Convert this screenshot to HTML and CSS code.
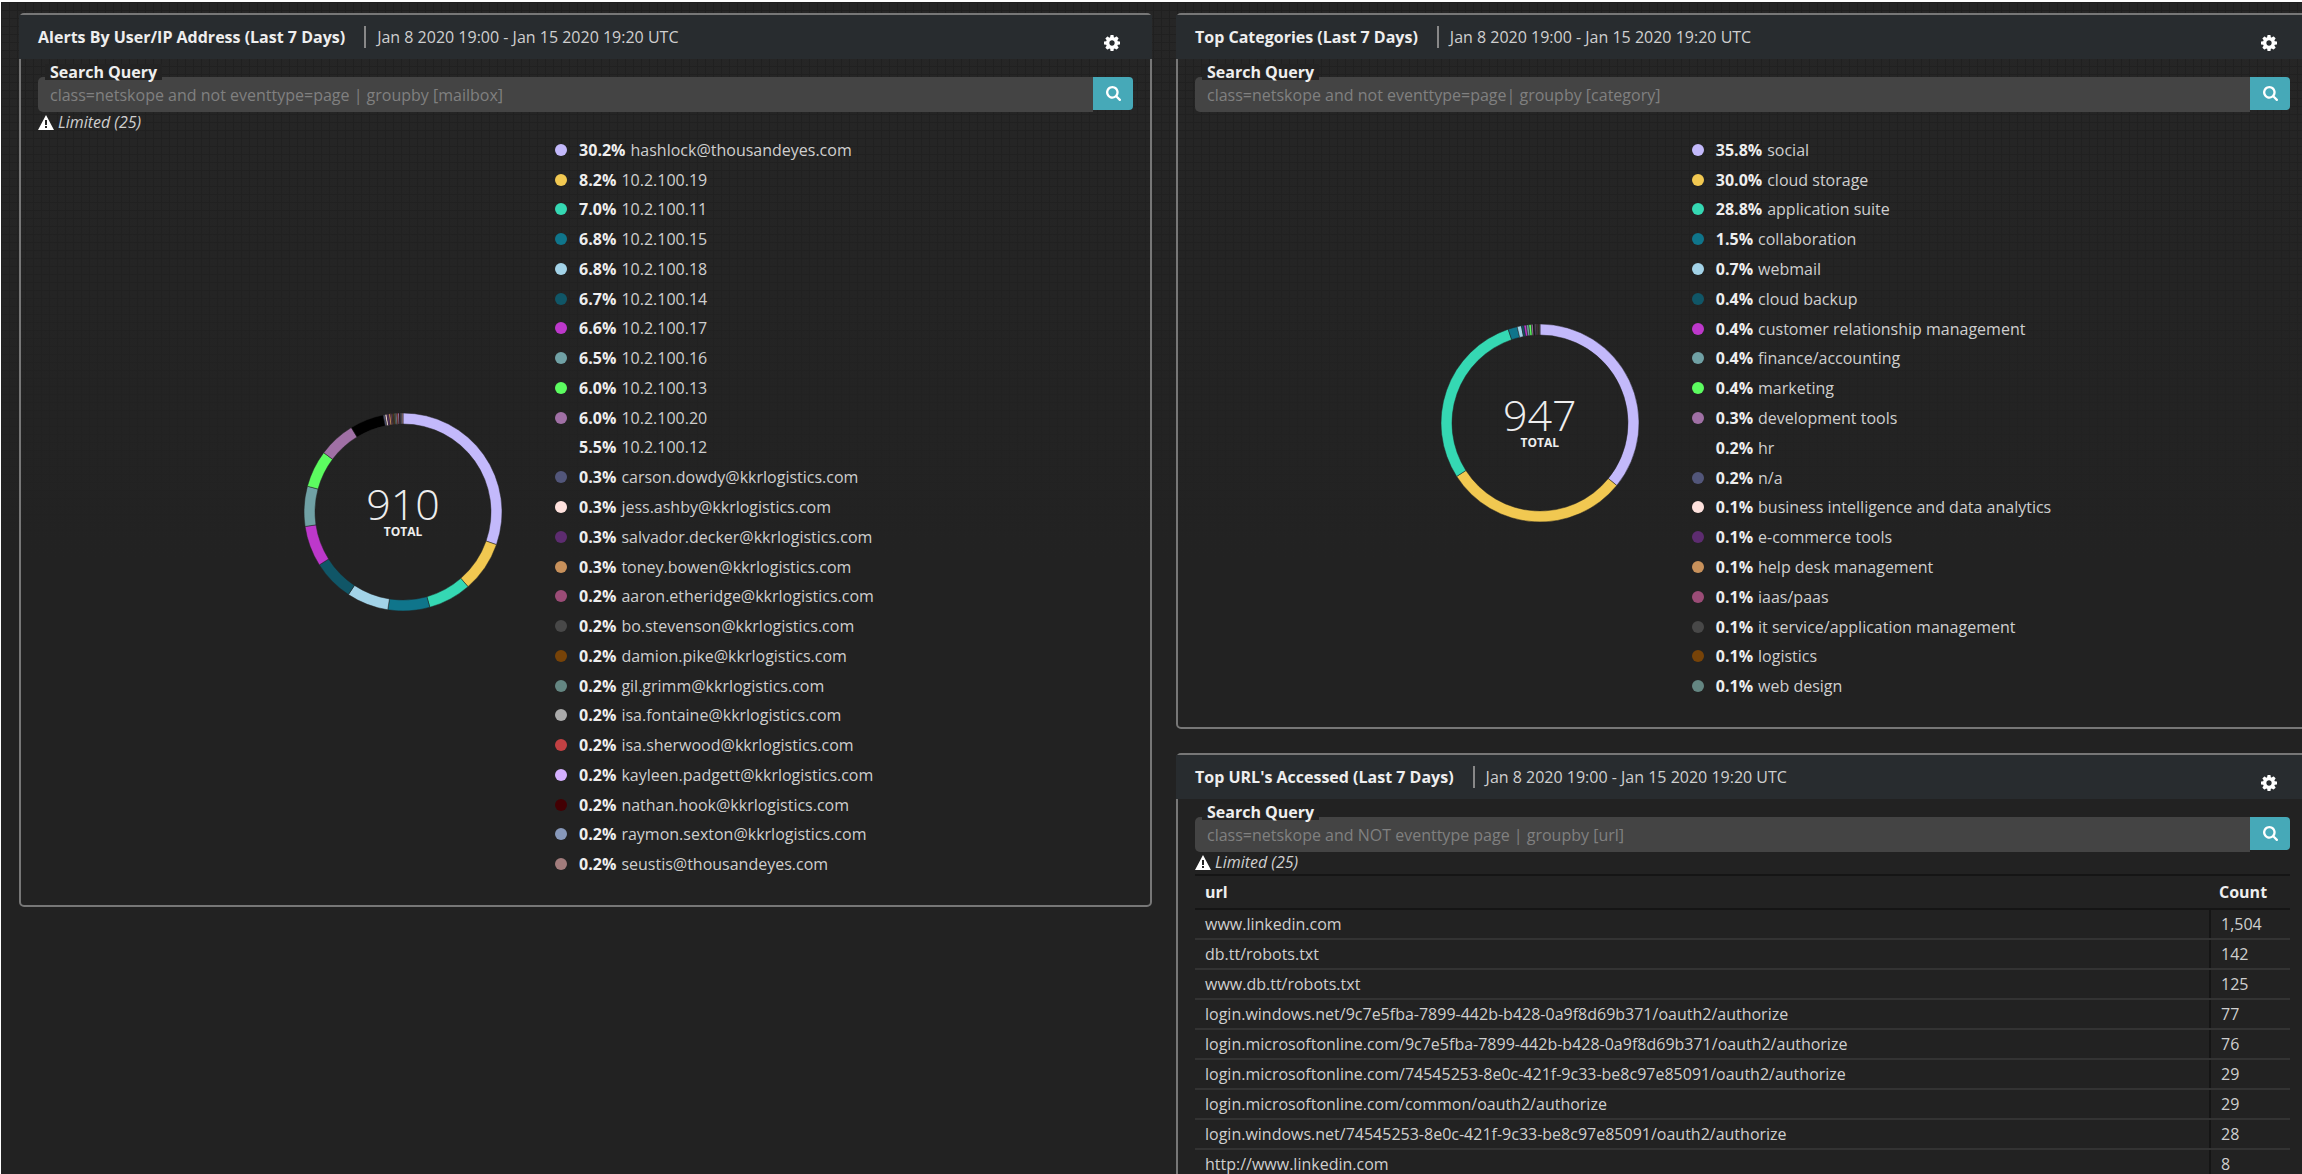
FILE: index.html
```html
<!DOCTYPE html>
<html lang="en">
<head>
<meta charset="utf-8">
<title>Netskope Dashboard</title>
<link rel="stylesheet" href="styles.css">
</head>
<body>
<svg class="sprite" aria-hidden="true">
  <symbol id="gear" viewBox="0 0 1536 1536"><path d="M1024 768q0-106-75-181t-181-75-181 75-75 181 75 181 181 75 181-75 75-181zm512-109v222q0 12-8 23t-20 13l-185 28q-19 54-39 91 35 50 107 138 10 12 10 25t-9 23q-27 37-99 108t-94 71q-12 0-26-9l-138-108q-44 23-91 38-16 136-29 186-7 28-36 28H657q-14 0-24.500-8.500T621 1506l-28-184q-49-16-90-37l-141 107q-10 9-25 9-14 0-25-11-126-114-165-168-7-10-7-23 0-12 8-23 15-21 51-66.500t54-70.500q-27-50-41-99L29 913q-13-2-21-12.500T0 877V655q0-12 8-23t19-13l186-28q14-46 39-92-40-57-107-138-10-12-10-24 0-10 9-23 26-36 98.500-107.500T337 135q13 0 26 10l138 107q44-23 91-38 16-136 29-186 7-28 36-28h222q14 0 24.500 8.500T915 30l28 184q49 16 90 37l142-107q9-9 24-9 13 0 25 10 129 119 165 170 7 8 7 22 0 12-8 23-15 21-51 66.500t-54 70.500q26 50 41 98l183 28q13 2 21 12.500t8 23.500z"/></symbol>
  <symbol id="search" viewBox="0 0 1664 1664"><path d="M1152 704q0-185-131.500-316.500T704 256 387.500 387.500 256 704t131.500 316.500T704 1152t316.500-131.500T1152 704zm512 832q0 52-38 90t-90 38q-54 0-90-38l-343-342q-179 124-399 124-143 0-273.500-55.500t-225-150-150-225T0 704t55.500-273.500 150-225 225-150T704 0t273.500 55.500 225 150 150 225T1408 704q0 220-124 399l343 343q37 37 37 90z"/></symbol>
  <symbol id="warn" viewBox="0 0 16 15"><path fill-rule="evenodd" d="M8 0 16 15H0zM7 5v5h2V5zm0 6v2h2v-2z"/></symbol>
</svg>
<main class="board">
  <div class="column">
    <section class="panel">
      <header class="panel-head">
        <h2>Alerts By User/IP Address (Last 7 Days)</h2>
        <span class="range">Jan 8 2020 19:00 - Jan 15 2020 19:20 UTC</span>
        <button class="gear" type="button" aria-label="Settings"><svg><use href="#gear"/></svg></button>
      </header>
      <form class="search">
        <label for="q1">Search Query</label>
        <input id="q1" type="text" placeholder="class=netskope and not eventtype=page | groupby [mailbox]">
        <button type="button" aria-label="Search"><svg><use href="#search"/></svg></button>
      </form>
      <p class="limited"><svg><use href="#warn"/></svg>Limited (25)</p>
      <div class="chart users">
        <div class="donut">
          <svg viewBox="0 0 200 200"></svg>
          <div class="total"><strong>910</strong><span>TOTAL</span></div>
        </div>
        <ul class="legend"></ul>
      </div>
    </section>
  </div>
  <div class="column">
    <section class="panel">
      <header class="panel-head">
        <h2>Top Categories (Last 7 Days)</h2>
        <span class="range">Jan 8 2020 19:00 - Jan 15 2020 19:20 UTC</span>
        <button class="gear" type="button" aria-label="Settings"><svg><use href="#gear"/></svg></button>
      </header>
      <form class="search">
        <label for="q2">Search Query</label>
        <input id="q2" type="text" placeholder="class=netskope and not eventtype=page| groupby [category]">
        <button type="button" aria-label="Search"><svg><use href="#search"/></svg></button>
      </form>
      <div class="chart categories">
        <div class="donut">
          <svg viewBox="0 0 200 200"></svg>
          <div class="total"><strong>947</strong><span>TOTAL</span></div>
        </div>
        <ul class="legend"></ul>
      </div>
    </section>
    <section class="panel">
      <header class="panel-head">
        <h2>Top URL's Accessed (Last 7 Days)</h2>
        <span class="range">Jan 8 2020 19:00 - Jan 15 2020 19:20 UTC</span>
        <button class="gear" type="button" aria-label="Settings"><svg><use href="#gear"/></svg></button>
      </header>
      <form class="search">
        <label for="q3">Search Query</label>
        <input id="q3" type="text" placeholder="class=netskope and NOT eventtype page | groupby [url]">
        <button type="button" aria-label="Search"><svg><use href="#search"/></svg></button>
      </form>
      <p class="limited"><svg><use href="#warn"/></svg>Limited (25)</p>
      <table class="urls">
        <thead><tr><th>url</th><th>Count</th></tr></thead>
        <tbody>
          <tr><td>www.linkedin.com</td><td>1,504</td></tr>
          <tr><td>db.tt/robots.txt</td><td>142</td></tr>
          <tr><td>www.db.tt/robots.txt</td><td>125</td></tr>
          <tr><td>login.windows.net/9c7e5fba-7899-442b-b428-0a9f8d69b371/oauth2/authorize</td><td>77</td></tr>
          <tr><td>login.microsoftonline.com/9c7e5fba-7899-442b-b428-0a9f8d69b371/oauth2/authorize</td><td>76</td></tr>
          <tr><td>login.microsoftonline.com/74545253-8e0c-421f-9c33-be8c97e85091/oauth2/authorize</td><td>29</td></tr>
          <tr><td>login.microsoftonline.com/common/oauth2/authorize</td><td>29</td></tr>
          <tr><td>login.windows.net/74545253-8e0c-421f-9c33-be8c97e85091/oauth2/authorize</td><td>28</td></tr>
          <tr><td>http://www.linkedin.com</td><td>8</td></tr>
        </tbody>
      </table>
    </section>
  </div>
</main>
<script src="charts.js"></script>
</body>
</html>
```
FILE: styles.css
```css
* { box-sizing: border-box; }
html { height: 100%; overflow: hidden; background: #222; }
body {
  margin: 0;
  min-height: 100%;
  border-top: 2px solid #fff;
  border-left: 1px solid #fff;
  color: #cfcfcf;
  font: 16px/20px "Open Sans", "Noto Sans", sans-serif;
  background:
    linear-gradient(rgba(34, 34, 34, 0), #222 560px),
    repeating-linear-gradient(90deg, #202020 0 1px, transparent 1px 8px),
    repeating-linear-gradient(#202020 0 1px, #262626 1px 8px);
}
h2, p, ul { margin: 0; padding: 0; }
button { border: 0; padding: 0; color: #fff; cursor: pointer; }
svg { fill: currentColor; }
.sprite { display: none; }
.board {
  display: grid;
  grid-template-columns: 1fr 1fr;
  align-items: start;
  gap: 24px;
  margin-right: -7px;
  padding: 11px 0 0 18px;
}
.column { display: grid; gap: 24px; }
.panel {
  border: 2px solid #777;
  border-radius: 5px;
  padding: 0 17px 26px;
}
.panel-head {
  display: flex;
  align-items: center;
  height: 44px;
  margin: 0 -19px 18px;
  padding: 0 32px 0 19px;
  background: #282c2f;
}
.panel-head h2 { color: #eee; font-size: 16px; font-weight: 700; }
.range { margin-left: 19px; padding-left: 11px; border-left: 2px solid #888; line-height: 22px; }
.gear { margin: 12px 0 0 auto; background: none; }
.gear svg { display: block; width: 16px; height: 16px; }
.search { display: flex; align-items: flex-start; position: relative; }
.search label {
  position: absolute;
  top: -13px;
  left: 7px;
  padding: 0 5px;
  color: #eee;
  font-weight: 700;
  line-height: 16px;
  background: #232323;
}
.search input {
  flex: 1;
  height: 35px;
  padding: 0 12px;
  border: 0;
  border-radius: 5px 0 0 5px;
  color: #ccc;
  font: inherit;
  background: #444;
}
.search input::placeholder { color: #808080; opacity: 1; }
.search button {
  display: grid;
  place-items: center;
  width: 40px;
  height: 33px;
  border-radius: 0 4px 4px 0;
  background: #46a9b8;
}
.search svg { width: 15px; height: 15px; }
.limited { display: flex; align-items: center; gap: 4px; font-style: italic; }
.limited svg { width: 16px; height: 15px; color: #fff; }
.chart { display: flex; align-items: center; justify-content: center; gap: 52px; padding-left: 6px; }
.users { padding-top: 3px; }
.categories { padding-top: 23px; }
.donut {
  display: grid;
  place-items: center;
  padding-top: 10px;
  color: #eee;
}
.donut svg { width: 200px; height: 200px; }
.donut > * { grid-area: 1 / 1; }
.total { display: grid; justify-items: center; }
.total strong { font-size: 43px; font-weight: 300; line-height: 40px; }
.total span { font-size: 12px; font-weight: 700; line-height: 16px; }
.legend { display: grid; grid-auto-rows: 1fr; align-items: center; list-style: none; }
.users .legend { height: 744px; }
.categories .legend { height: 566px; }
.legend li { display: flex; align-items: center; }
.legend i { width: 12px; height: 12px; margin-right: 12px; border-radius: 50%; }
.legend b { margin-right: 5px; color: #eee; }
.urls { width: 100%; margin-top: 2px; border-collapse: collapse; }
.urls th, .urls td { height: 30px; padding: 0 10px; text-align: left; border-bottom: 2px solid #333; }
.urls th { height: 34px; color: #eee; border-top: 2px solid #151515; border-bottom: 2px solid #151515; }
.urls th:last-child { width: 80px; padding-left: 9px; }
.urls td:last-child { border-left: 2px solid #151515; }
```
FILE: charts.js
```js
const palette = ["#c3b9fb", "#f1c851", "#35d8b3", "#0f758b", "#a3d3e8", "#105667", "#bd38cb",
  "#70a1a5", "#5cfc60", "#a070a5", "#000000", "#52567a", "#ffe2de", "#5d2c70", "#c8915b",
  "#9b4c77", "#484848", "#774308", "#648682", "#ababab", "#c24143", "#d5b0ff", "#430003",
  "#8798ba", "#a27c7c"];

const users = [
  [30.2, "hashlock@thousandeyes.com"], [8.2, "10.2.100.19"], [7.0, "10.2.100.11"],
  [6.8, "10.2.100.15"], [6.8, "10.2.100.18"], [6.7, "10.2.100.14"], [6.6, "10.2.100.17"],
  [6.5, "10.2.100.16"], [6.0, "10.2.100.13"], [6.0, "10.2.100.20"], [5.5, "10.2.100.12"],
  [0.3, "carson.dowdy@kkrlogistics.com"], [0.3, "jess.ashby@kkrlogistics.com"],
  [0.3, "salvador.decker@kkrlogistics.com"], [0.3, "toney.bowen@kkrlogistics.com"],
  [0.2, "aaron.etheridge@kkrlogistics.com"], [0.2, "bo.stevenson@kkrlogistics.com"],
  [0.2, "damion.pike@kkrlogistics.com"], [0.2, "gil.grimm@kkrlogistics.com"],
  [0.2, "isa.fontaine@kkrlogistics.com"], [0.2, "isa.sherwood@kkrlogistics.com"],
  [0.2, "kayleen.padgett@kkrlogistics.com"], [0.2, "nathan.hook@kkrlogistics.com"],
  [0.2, "raymon.sexton@kkrlogistics.com"], [0.2, "seustis@thousandeyes.com"]
];

const categories = [
  [35.8, "social"], [30.0, "cloud storage"], [28.8, "application suite"], [1.5, "collaboration"],
  [0.7, "webmail"], [0.4, "cloud backup"], [0.4, "customer relationship management"],
  [0.4, "finance/accounting"], [0.4, "marketing"], [0.3, "development tools"], [0.2, "hr"],
  [0.2, "n/a"], [0.1, "business intelligence and data analytics"], [0.1, "e-commerce tools"],
  [0.1, "help desk management"], [0.1, "iaas/paas"], [0.1, "it service/application management"],
  [0.1, "logistics"], [0.1, "web design"]
];

function draw(selector, rows) {
  const chart = document.querySelector(selector);
  const total = rows.reduce((sum, row) => sum + row[0], 0);
  const point = (share, r) => {
    const a = share / total * 2 * Math.PI;
    return (100 + r * Math.sin(a)).toFixed(2) + " " + (100 - r * Math.cos(a)).toFixed(2);
  };
  let start = 0;
  let arcs = "";
  let items = "";
  rows.forEach(([share, name], i) => {
    const end = start + share;
    arcs += `<path fill="${palette[i]}" stroke="#222" stroke-width=".5" d="M${point(start, 99)}` +
      `A99 99 0 0 1 ${point(end, 99)}L${point(end, 88)}A88 88 0 0 0 ${point(start, 88)}Z"/>`;
    const dot = palette[i] === "#000000" ? "transparent" : palette[i];
    items += `<li><i style="background:${dot}"></i><b>${share.toFixed(1)}%</b>${name}</li>`;
    start = end;
  });
  chart.querySelector("svg").innerHTML = arcs;
  chart.querySelector(".legend").innerHTML = items;
}

draw(".users", users);
draw(".categories", categories);
```
